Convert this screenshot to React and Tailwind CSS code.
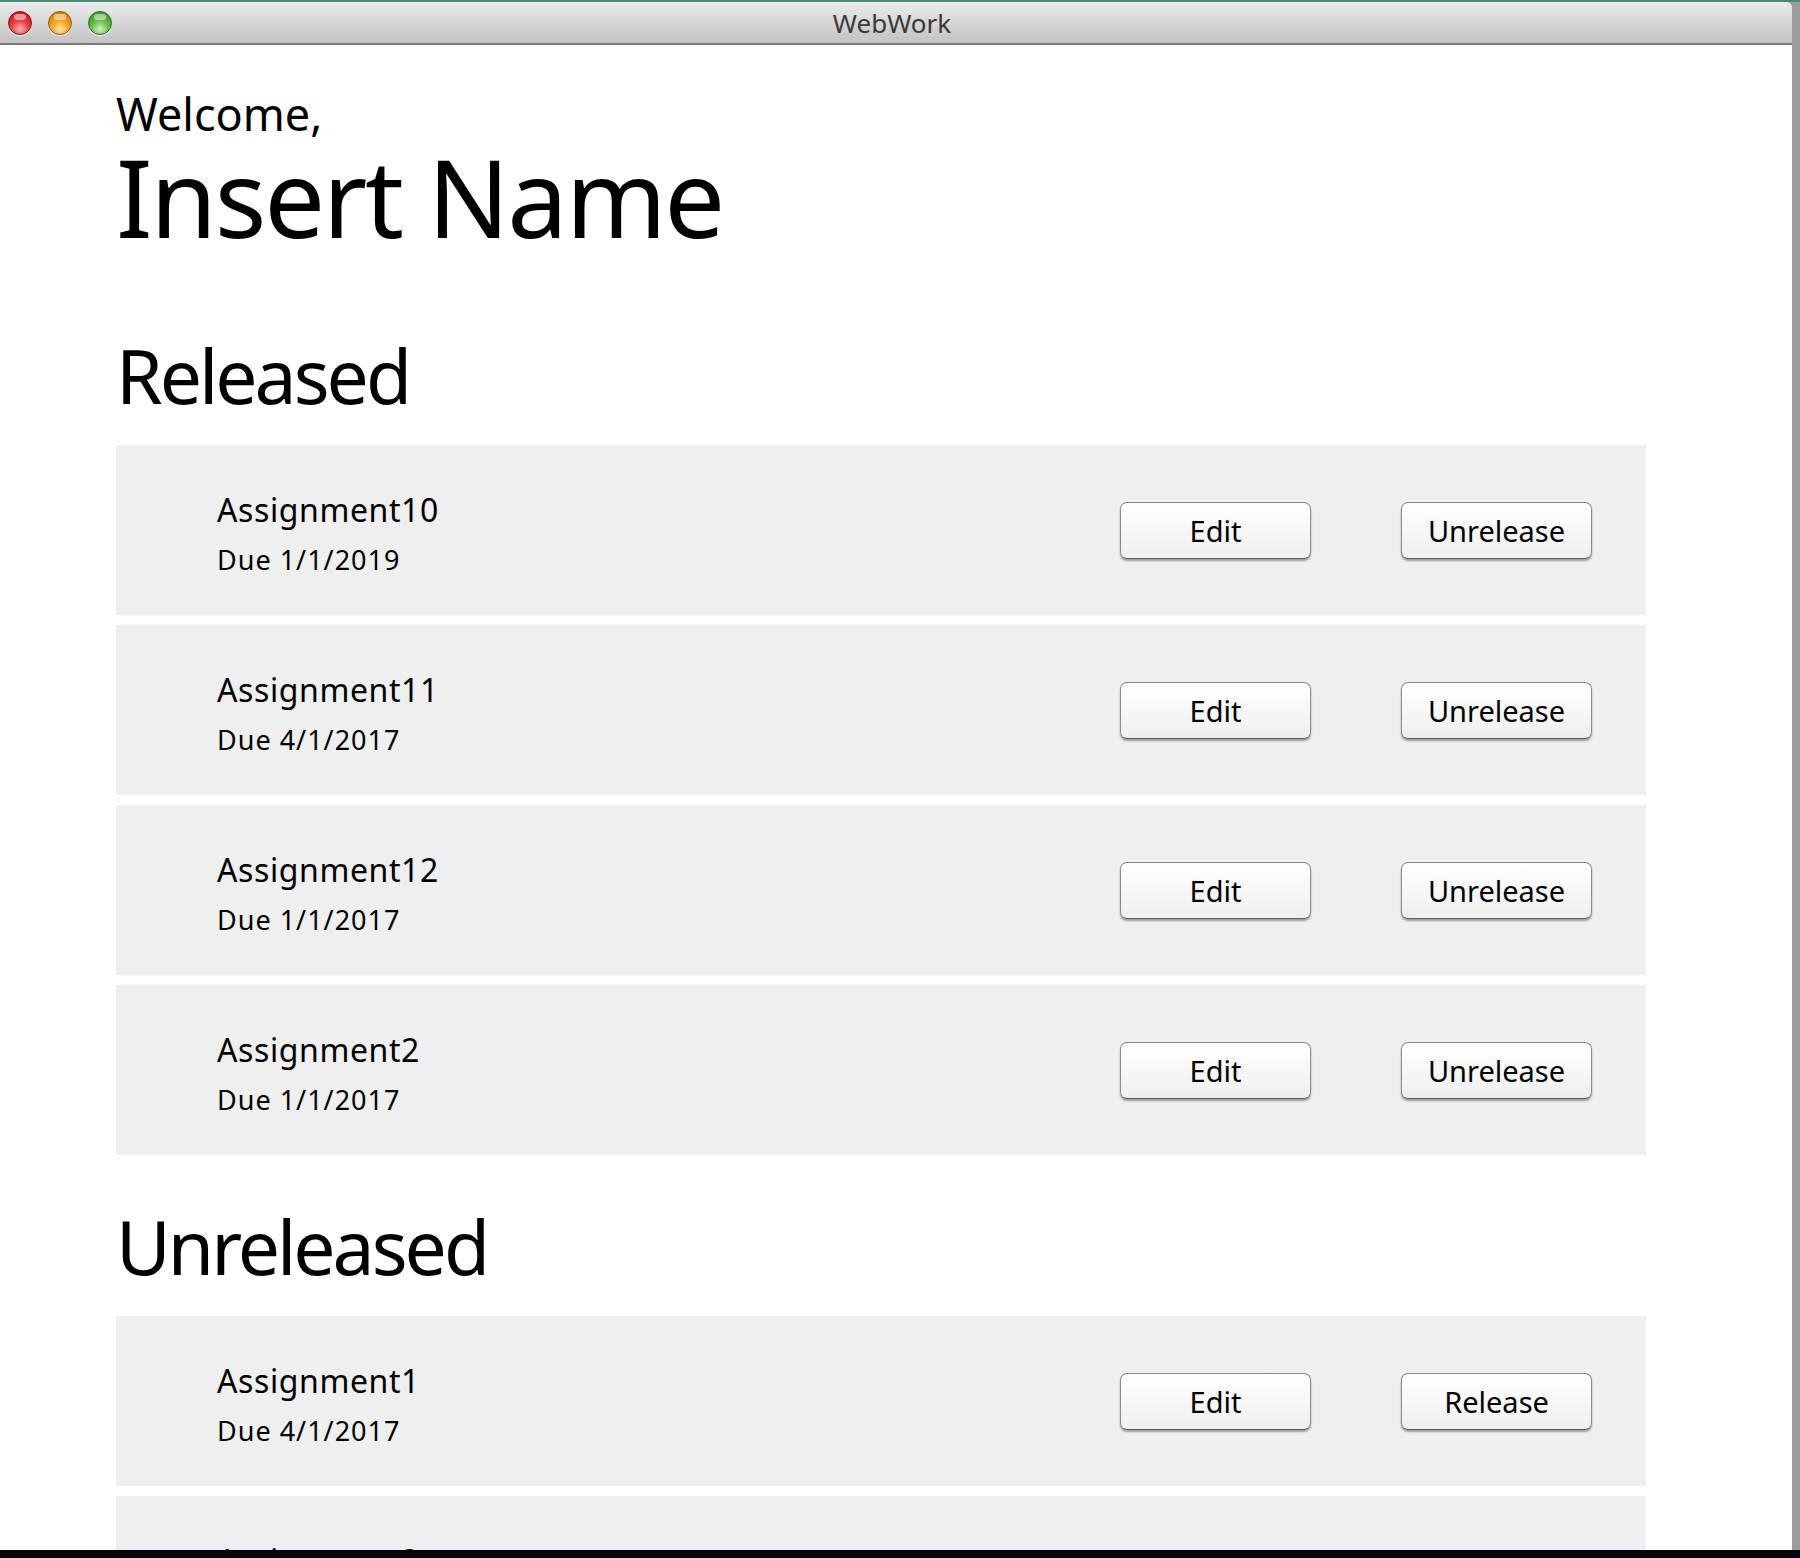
import React from 'react';

const released = [
  { name: 'Assignment10', due: '1/1/2019' },
  { name: 'Assignment11', due: '4/1/2017' },
  { name: 'Assignment12', due: '1/1/2017' },
  { name: 'Assignment2', due: '1/1/2017' },
];

const unreleased = [
  { name: 'Assignment1', due: '4/1/2017' },
  { name: 'Assignment3', due: '4/1/2017' },
];

function MacButton({ children }) {
  return (
    <button className="w-[191px] h-[57px] rounded-[7px] border border-[#8a8a8a] border-b-[#5f5f5f] bg-gradient-to-b from-white to-[#efefef] shadow-[0_2px_2px_rgba(0,0,0,0.35)] text-[29px] leading-none text-black flex items-center justify-center">
      {children}
    </button>
  );
}

function AssignmentRow({ item, released }) {
  return (
    <div className="h-[170px] bg-[#efefef] flex items-center justify-between pl-[101px] pr-[54px]">
      <div className="self-start pt-[49px]">
        <div className="text-[32px] leading-none tracking-[0.6px] text-black">{item.name}</div>
        <div className="mt-[20px] text-[27px] leading-none tracking-[1px] text-black">Due {item.due}</div>
      </div>
      <div className="flex items-center gap-[90px]">
        <MacButton>Edit</MacButton>
        <MacButton>{released ? 'Unrelease' : 'Release'}</MacButton>
      </div>
    </div>
  );
}

function Light({ color }) {
  const styles = {
    red: 'bg-[radial-gradient(circle_at_50%_78%,#ffb0b0_0%,#e63a3e_45%,#a8121a_100%)] border-[#7e1418]',
    yellow: 'bg-[radial-gradient(circle_at_50%_78%,#ffe49a_0%,#f2a322_45%,#b86a0c_100%)] border-[#8a5a10]',
    green: 'bg-[radial-gradient(circle_at_50%_78%,#d4f2bc_0%,#62bb48_45%,#337f22_100%)] border-[#346e26]',
  };
  return (
    <div className={`relative w-[24px] h-[24px] rounded-full border ${styles[color]} shadow-[0_1px_1px_rgba(255,255,255,0.7)]`}>
      <div className="absolute left-[5px] top-[2px] w-[12px] h-[6px] rounded-full bg-white/50" />
    </div>
  );
}

export default function App() {
  return (
    <div className="w-[1800px] h-[1558px] overflow-hidden bg-[#9c9c9c] flex flex-col" style={{ fontFamily: '"Noto Sans", "DejaVu Sans", sans-serif' }}>
      <div className="h-[2px] bg-[#3f8f72] shrink-0" />
      <div className="w-[1792px] h-[1548px] shrink-0 flex flex-col overflow-hidden rounded-tr-[6px] bg-white">
        {/* title bar */}
        <div className="relative h-[43px] shrink-0 bg-gradient-to-b from-[#ebebeb] to-[#c3c3c3] border-b-2 border-[#7b7b7b] flex items-center">
          <div className="flex items-center gap-[16px] pl-[8px] pt-[1px]">
            <Light color="red" />
            <Light color="yellow" />
            <Light color="green" />
          </div>
          <div className="absolute inset-0 flex items-center justify-center text-[26px] leading-none text-[#3a3a3a] pr-[8px]">
            WebWork
          </div>
        </div>

        {/* content */}
        <div className="pl-[116px] pt-[46px]">
          <div className="text-[45px] leading-none text-black">Welcome,</div>
          <div className="mt-[7px] text-[108px] leading-none tracking-[-2.3px] text-black">Insert Name</div>

          <h2 className="mt-[87px] text-[75px] leading-none tracking-[-3px] text-black">Released</h2>
          <div className="mt-[32px] w-[1530px] flex flex-col gap-[10px]">
            {released.map((a) => (
              <AssignmentRow key={a.name} item={a} released />
            ))}
          </div>

          <h2 className="mt-[54px] text-[75px] leading-none tracking-[-3px] text-black">Unreleased</h2>
          <div className="mt-[32px] w-[1530px] flex flex-col gap-[10px]">
            {unreleased.map((a) => (
              <AssignmentRow key={a.name} item={a} />
            ))}
          </div>
        </div>
      </div>
      <div className="h-[8px] shrink-0 bg-[#03060b]" />
    </div>
  );
}
